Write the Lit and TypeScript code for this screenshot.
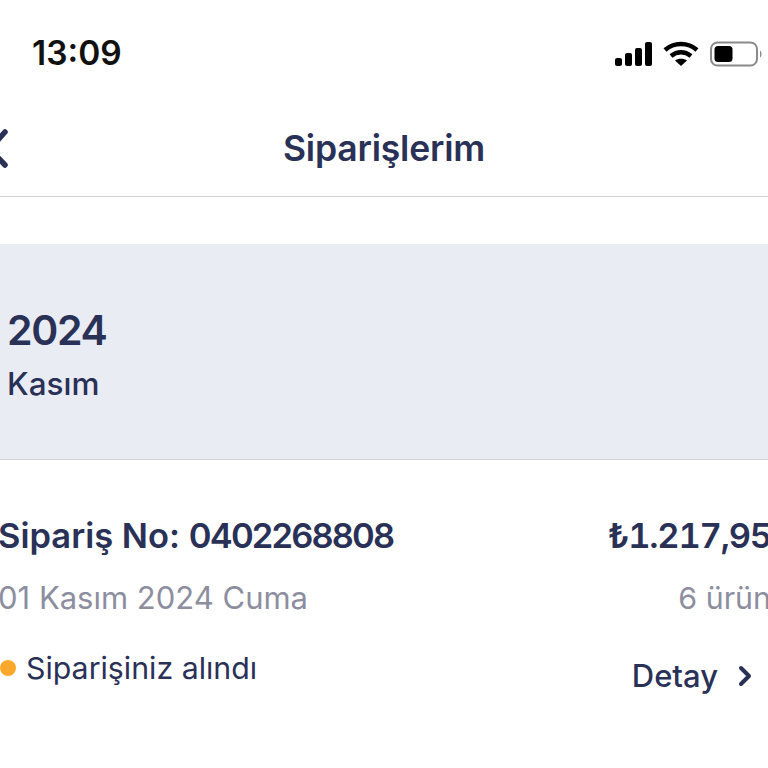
import { LitElement, html, css } from "lit";
import { customElement } from "lit/decorators.js";

@customElement("app-root")
export class AppRoot extends LitElement {
  static styles = css`
    :host { display: block; width: 768px; height: 768px; overflow: hidden; background: #fff; font-family: Inter, "Liberation Sans", sans-serif; color: #2a3157; }
    .status { height: 101px; display: flex; justify-content: space-between; align-items: center; box-sizing: border-box; padding: 6px 0 0 32px; }
    .time { font-size: 33.5px; font-weight: 600; color: #111; line-height: 1; }
    .icons { display: flex; align-items: center; gap: 11px; padding-right: 6px; }
    .icons svg { display: block; }
    .nav { height: 96px; box-sizing: border-box; border-bottom: 1px solid #cfcfd2; display: flex; align-items: center; justify-content: center; position: relative; }
    .nav h1 { margin: 0; font-size: 35.5px; font-weight: 600; letter-spacing: -0.2px; }
    .back { position: absolute; left: -14px; top: 24px; }
    .band { margin-top: 47px; height: 216px; box-sizing: border-box; background: #eaecf4; border-bottom: 1px solid #d3d4d8; padding: 60px 0 0 7px; }
    .year { font-size: 41px; font-weight: 600; line-height: 52px; letter-spacing: -1.3px; }
    .month { font-size: 31.5px; font-weight: 500; line-height: 40px; margin-top: 8px; }
    .order { display: grid; grid-template-columns: 1fr auto; margin: 55px 0 0 -2px; }
    .no, .price { font-size: 34.5px; font-weight: 600; line-height: 42px; }
    .digits { letter-spacing: -1.8px; }
    .price { font-variant-numeric: tabular-nums; margin-right: -3px; white-space: nowrap; letter-spacing: -1.2px; }
    .date, .count { font-size: 31px; line-height: 38px; color: #8c8e9f; margin-top: 22px; }
    .count { margin-right: -3px; font-size: 30.4px; }
    .price, .count { text-align: right; }
    .state { display: flex; align-items: center; gap: 10px; font-size: 30.3px; line-height: 38px; padding-left: 2px; margin-top: 32px; align-self: start; }
    .dot { width: 16px; height: 16px; border-radius: 50%; background: #fca82c; }
    .detail { display: flex; align-items: center; justify-content: flex-end; gap: 20px; font-size: 31px; font-weight: 500; line-height: 38px; padding-right: 16px; margin-top: 40px; }
  `;

  render() {
    return html`
      <div class="status">
        <span class="time">13:09</span>
        <div class="icons">
          <svg width="38" height="26" viewBox="0 0 38 26" fill="#000">
            <rect x="1" y="17" width="7" height="8" rx="2"/>
            <rect x="11" y="12" width="7" height="13" rx="2"/>
            <rect x="21" y="7" width="7" height="18" rx="2"/>
            <rect x="31" y="1" width="7" height="24" rx="2"/>
          </svg>
          <svg width="36" height="26" viewBox="0 0 36 26" fill="none" stroke="#000" stroke-width="4.4">
            <path d="M2 9 C11 1 25 1 34 9"/>
            <path d="M8 15 C14 10 22 10 28 15"/>
            <path d="M18 25 L12 19.5 C15 17 21 17 24 19.5 Z" fill="#000" stroke="none"/>
          </svg>
          <svg width="52" height="26" viewBox="0 0 52 26">
            <rect x="1" y="1.5" width="46" height="23" rx="6.5" fill="#fff" stroke="#8a8a8a" stroke-width="2"/>
            <rect x="4.5" y="5" width="18" height="16" rx="3.5" fill="#000"/>
            <path d="M50 9.5 C52 10.5 52 15.5 50 16.5 Z" fill="#8a8a8a"/>
          </svg>
        </div>
      </div>
      <div class="nav">
        <svg class="back" width="24" height="48" viewBox="0 0 24 48" fill="none" stroke="#2a3157" stroke-width="5.5" stroke-linecap="round" stroke-linejoin="round"><path d="M19 7 L4 24 L19 40"/></svg>
        <h1>Siparişlerim</h1>
      </div>
      <div class="band">
        <div class="year">2024</div>
        <div class="month">Kasım</div>
      </div>
      <div class="order">
        <div class="no">Sipariş No: <span class="digits">0402268808</span></div>
        <div class="price">₺1.217,95</div>
        <div class="date">01 Kasım 2024 Cuma</div>
        <div class="count">6 ürün</div>
        <div class="state"><span class="dot"></span>Siparişiniz alındı</div>
        <div class="detail">Detay
          <svg width="14" height="22" viewBox="0 0 14 22" fill="none" stroke="#2a3157" stroke-width="4" stroke-linecap="round" stroke-linejoin="round"><path d="M3 3 L11 11 L3 19"/></svg>
        </div>
      </div>
    `;
  }
}
